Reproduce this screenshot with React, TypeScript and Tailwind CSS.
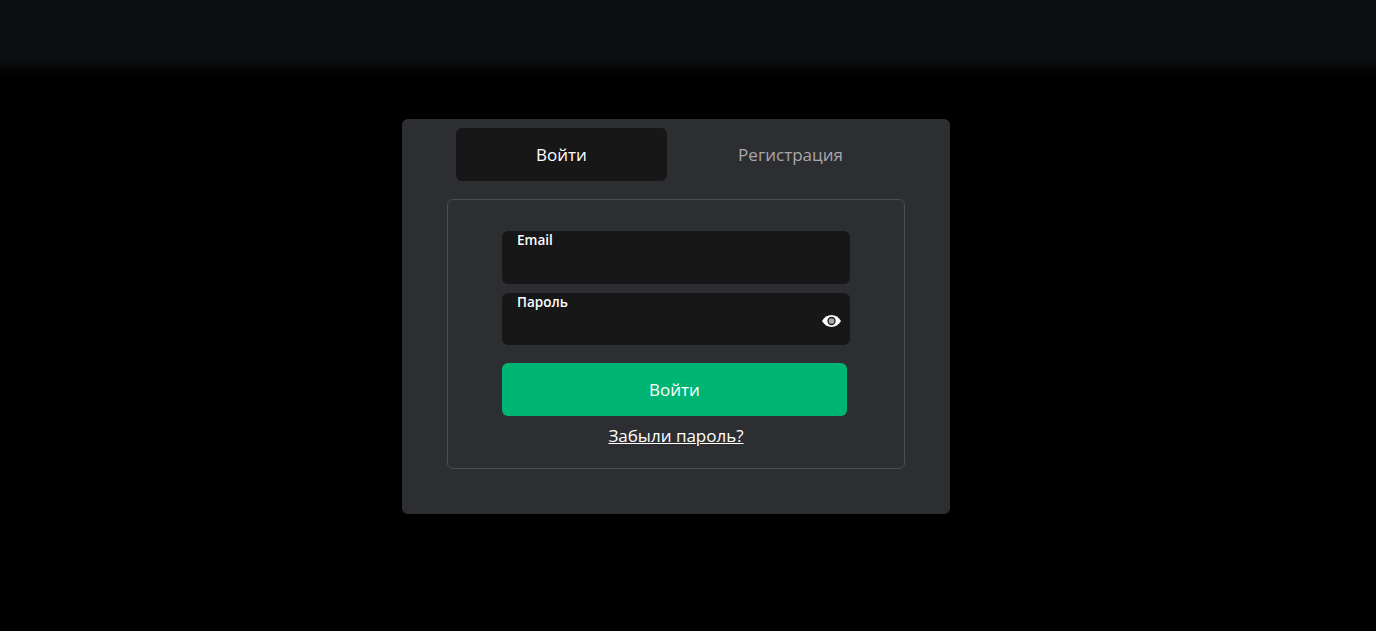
import React from "react";

function EyeIcon() {
  return (
    <svg width="19" height="12" viewBox="0 0 19 12" className="block">
      <path d="M0 6C2.200 2.300 5.600 0 9.500 0S16.800 2.300 19 6c-2.200 3.700-5.600 6-9.500 6S2.200 9.700 0 6z" fill="#ffffff" />
      <circle cx="9.500" cy="6" r="3.500" fill="#a8a8a8" stroke="#1c1c1c" strokeWidth="1.300" />
    </svg>
  );
}

function Field({ label, eye, className }: { label: string; eye?: boolean; className: string }) {
  return (
    <div className={`relative w-[348px] rounded-md bg-[#171717] ${className}`}>
      <span className="absolute left-[15px] top-0 text-[13.5px] leading-[18px] font-semibold text-white">{label}</span>
      {eye && (
        <span className="absolute right-[9px] top-[22px]">
          <EyeIcon />
        </span>
      )}
    </div>
  );
}

export default function App() {
  return (
    <div className="min-h-[631px] bg-black font-['Open_Sans','Noto_Sans',sans-serif] text-white">
      <div className="h-[75px] bg-[linear-gradient(to_bottom,#0d0f11_0%,#0d0f11_78%,#000000_100%)]" />

      <div className="mt-[44px] pr-[24px]">
        <div className="mx-auto flex h-[395px] w-[548px] flex-col items-center rounded-md bg-[#2d2e32] pt-[9px]">
          <div className="flex gap-[18px]">
            <button className="h-[53px] w-[211px] rounded-md bg-[#171717] text-[17px] font-medium text-white">Войти</button>
            <button className="h-[53px] w-[211px] rounded-md text-[17px] font-medium text-[#a8a8aa]">Регистрация</button>
          </div>

          <div className="mt-[18px] flex h-[270px] w-[458px] flex-col items-start rounded-md border border-[#4b4c50] pl-[54px] pt-[31px]">
            <div className="flex flex-col gap-[9px]">
              <Field label="Email" className="h-[53px]" />
              <Field label="Пароль" eye className="h-[52px]" />
            </div>
            <button className="mt-[18px] h-[53px] w-[345px] rounded-md bg-[#00b574] text-[17px] font-medium text-white">Войти</button>
            <a className="mt-[7px] w-[348px] text-center text-[17px] leading-[26px] font-medium text-white underline">Забыли пароль?</a>
          </div>
        </div>
      </div>
    </div>
  );
}
